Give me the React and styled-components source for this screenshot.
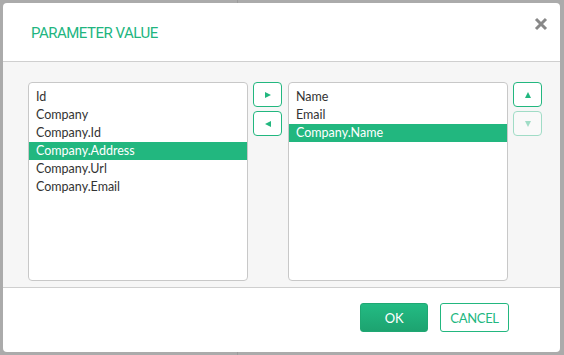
import React from 'react';
import styled, { createGlobalStyle } from 'styled-components';

const GlobalStyle = createGlobalStyle`
  html, body {
    margin: 0;
    padding: 0;
  }
  body {
    width: 564px;
    height: 355px;
    overflow: hidden;
    background:
      linear-gradient(#9c9c9c, #9c9c9c) 237px 0 / 1px 100% no-repeat,
      #ababab;
    font-family: Lato, "Open Sans", sans-serif;
  }
`;

const Page = styled.div`
  padding: 3px 4px 3px 3px;
`;

const Dialog = styled.div`
  width: 557px;
  height: 349px;
  background: #fff;
  border-radius: 4px;
  display: flex;
  flex-direction: column;
  overflow: hidden;
`;

const Header = styled.div`
  height: 59px;
  box-sizing: border-box;
  border-bottom: 1px solid #cfcfcf;
  display: flex;
  align-items: center;
  justify-content: space-between;
  padding: 0 12px 2px 28px;
`;

const Title = styled.h2`
  margin: 3px 0 0;
  font-family: Roboto, Lato, sans-serif;
  font-size: 15px;
  font-weight: 400;
  color: #21b57f;
  letter-spacing: -0.5px;
`;

const Close = styled.button`
  border: 0;
  background: none;
  padding: 0;
  margin-top: -14px;
  width: 14px;
  height: 14px;
  display: flex;
  cursor: pointer;
`;

const Body = styled.div`
  height: 226px;
  box-sizing: border-box;
  background: #f6f6f6;
  border-bottom: 1px solid #cfcfcf;
  padding: 20px 0 6px 25px;
  display: flex;
  align-items: flex-start;
`;

const List = styled.ul`
  list-style: none;
  margin: 0;
  width: 220px;
  height: 199px;
  box-sizing: border-box;
  padding: 5px 0;
  background: #fff;
  border: 1px solid #c8c8c8;
  border-radius: 4px;
`;

const Item = styled.li`
  height: 18px;
  line-height: 18px;
  padding-left: 7px;
  font-size: 12.5px;
  color: ${p => (p.$selected ? '#fff' : '#333')};
  background: ${p => (p.$selected ? '#22b77f' : 'transparent')};
`;

const Buttons = styled.div`
  display: flex;
  flex-direction: column;
  gap: 4px;
  margin: 0 ${p => p.$right}px 0 ${p => p.$left}px;
`;

const IconButton = styled.button`
  width: 29px;
  height: 25px;
  padding: 0;
  box-sizing: border-box;
  background: #fff;
  border: 1px solid #22b77f;
  border-radius: 4px;
  display: flex;
  align-items: center;
  justify-content: center;
  opacity: ${p => (p.disabled ? 0.4 : 1)};
`;

const Footer = styled.div`
  flex: 1;
  display: flex;
  justify-content: flex-end;
  align-items: flex-start;
  gap: 12px;
  padding: 15px 51px 0 0;
`;

const Action = styled.button`
  width: ${p => p.$w}px;
  height: 29px;
  box-sizing: border-box;
  border-radius: 3px;
  font-family: Lato, "Open Sans", sans-serif;
  font-size: 13px;
  letter-spacing: -0.3px;
  text-transform: uppercase;
  border: 1px solid ${p => (p.$primary ? '#1fa873' : '#22b77f')};
  color: ${p => (p.$primary ? '#fff' : '#22b77f')};
  background: ${p => (p.$primary ? 'linear-gradient(#23bb83, #1da370)' : '#fff')};
`;

const Arrow = ({ dir }) => {
  const pts = {
    right: '1,1 7,4 1,7',
    left: '7,1 1,4 7,7',
    up: '1,7 4,1 7,7',
    down: '1,1 4,7 7,1',
  }[dir];
  return (
    <svg width="8" height="8" viewBox="0 0 8 8">
      <polygon points={pts} fill="#22b77f" />
    </svg>
  );
};

const left = ['Id', 'Company', 'Company.Id', 'Company.Address', 'Company.Url', 'Company.Email'];
const right = ['Name', 'Email', 'Company.Name'];

export default function App() {
  return (
    <Page>
      <GlobalStyle />
      <Dialog>
        <Header>
          <Title>PARAMETER VALUE</Title>
          <Close aria-label="Close">
            <svg width="14" height="14" viewBox="0 0 14 14">
              <path d="M2 2 L12 12 M12 2 L2 12" stroke="#888" strokeWidth="3" />
            </svg>
          </Close>
        </Header>
        <Body>
          <List>
            {left.map(t => (
              <Item key={t} $selected={t === 'Company.Address'}>{t}</Item>
            ))}
          </List>
          <Buttons $left={5} $right={6}>
            <IconButton><Arrow dir="right" /></IconButton>
            <IconButton><Arrow dir="left" /></IconButton>
          </Buttons>
          <List>
            {right.map(t => (
              <Item key={t} $selected={t === 'Company.Name'}>{t}</Item>
            ))}
          </List>
          <Buttons $left={5} $right={0}>
            <IconButton><Arrow dir="up" /></IconButton>
            <IconButton disabled><Arrow dir="down" /></IconButton>
          </Buttons>
        </Body>
        <Footer>
          <Action $primary $w={68}>OK</Action>
          <Action $w={69}>Cancel</Action>
        </Footer>
      </Dialog>
    </Page>
  );
}
